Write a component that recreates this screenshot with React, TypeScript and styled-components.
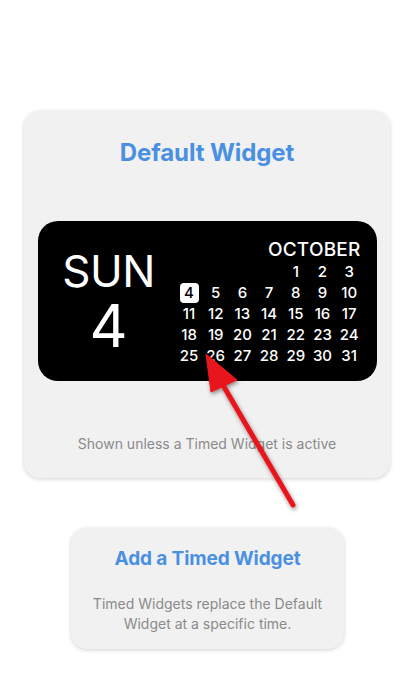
import React from "react";
import styled, { createGlobalStyle } from "styled-components";

const GlobalStyle = createGlobalStyle`
  html, body {
    margin: 0;
    padding: 0;
    background: #ffffff;
  }
  body {
    font-family: Inter, "Noto Sans", "Liberation Sans", sans-serif;
    -webkit-font-smoothing: antialiased;
  }
`;

const weeks: (number | null)[][] = [
  [null, null, null, null, 1, 2, 3],
  [4, 5, 6, 7, 8, 9, 10],
  [11, 12, 13, 14, 15, 16, 17],
  [18, 19, 20, 21, 22, 23, 24],
  [25, 26, 27, 28, 29, 30, 31],
];

const today = 4;

const App: React.FC = () => {
  return (
    <Page>
      <GlobalStyle />
      <DefaultCard>
        <CardTitle size={24}>Default Widget</CardTitle>
        <Widget>
          <DayBlock>
            <DayName>SUN</DayName>
            <DayNumber>{today}</DayNumber>
          </DayBlock>
          <Calendar>
            <MonthName>OCTOBER</MonthName>
            <Grid>
              {weeks.flat().map((d, i) => (
                <Cell key={i}>
                  {d !== null && <DayText active={d === today}>{d}</DayText>}
                </Cell>
              ))}
            </Grid>
          </Calendar>
        </Widget>
        <Caption>Shown unless a Timed Widget is active</Caption>
      </DefaultCard>

      <TimedCard>
        <CardTitle size={19}>Add a Timed Widget</CardTitle>
        <TimedText>
          Timed Widgets replace the Default
          <br />
          Widget at a specific time.
        </TimedText>
      </TimedCard>

      {/* annotation arrow drawn over the screenshot */}
      <Arrow viewBox="0 0 410 700" width="410" height="700">
        <defs>
          <filter id="arrowShadow" x="-20%" y="-20%" width="140%" height="140%">
            <feDropShadow dx="1" dy="2" stdDeviation="2" floodColor="#000" floodOpacity="0.45" />
          </filter>
        </defs>
        <g filter="url(#arrowShadow)" fill="#e8141b" stroke="#e8141b">
          <line x1="293" y1="505" x2="220" y2="380" strokeWidth="5" strokeLinecap="round" />
          <polygon points="206,354 237,380 211,392" strokeWidth="1" strokeLinejoin="round" />
        </g>
      </Arrow>
    </Page>
  );
};

const Page = styled.div`
  position: relative;
  width: 410px;
  height: 700px;
  padding-top: 111px;
  box-sizing: border-box;
  display: flex;
  flex-direction: column;
  align-items: center;
`;

const Card = styled.div`
  background: #f1f1f1;
  border-radius: 16px;
  box-shadow: 0 1px 4px rgba(0, 0, 0, 0.18);
  display: flex;
  flex-direction: column;
  align-items: center;
  box-sizing: border-box;
`;

const DefaultCard = styled(Card)`
  width: 366px;
  height: 367px;
  margin-left: 4px;
  padding: 28px 14px 0;
`;

const TimedCard = styled(Card)`
  width: 273px;
  height: 121px;
  margin-top: 50px;
  margin-left: 5px;
  padding-top: 17px;
`;

const CardTitle = styled.div<{ size: number }>`
  color: #4a90e2;
  font-size: ${(p) => p.size}px;
  font-weight: 700;
  line-height: 28px;
  letter-spacing: -0.1px;
`;

const Widget = styled.div`
  margin-top: 54px;
  width: 339px;
  height: 160px;
  background: #000;
  border-radius: 20px;
  display: flex;
  align-items: stretch;
  box-sizing: border-box;
  padding: 18px 14px 0 4px;
`;

const DayBlock = styled.div`
  flex: 1;
  display: flex;
  flex-direction: column;
  align-items: center;
  padding-top: 11px;
  color: #fff;
`;

const DayName = styled.div`
  font-size: 44px;
  font-weight: 400;
  line-height: 42px;
  letter-spacing: -0.5px;
`;

const DayNumber = styled.div`
  font-size: 59px;
  font-weight: 400;
  line-height: 56px;
  margin-top: 6px;
`;

const Calendar = styled.div`
  display: flex;
  flex-direction: column;
  align-items: flex-end;
  color: #fff;
`;

const MonthName = styled.div`
  font-size: 19px;
  font-weight: 500;
  line-height: 22px;
  margin-right: 2px;
  letter-spacing: 0.2px;
`;

const Grid = styled.div`
  display: grid;
  grid-template-columns: repeat(7, 26.7px);
  grid-auto-rows: 20.8px;
  margin-top: 1px;
`;

const Cell = styled.div`
  display: flex;
  align-items: center;
  justify-content: center;
`;

const DayText = styled.span<{ active?: boolean }>`
  font-size: 15px;
  font-weight: 500;
  line-height: 20px;
  min-width: ${(p) => (p.active ? "19px" : "0")};
  height: 20px;
  text-align: center;
  border-radius: 4px;
  background: ${(p) => (p.active ? "#fff" : "transparent")};
  color: ${(p) => (p.active ? "#000" : "#fff")};
`;

const Caption = styled.div`
  margin-top: 54px;
  color: #8a8a8a;
  font-size: 14px;
  line-height: 18px;
`;

const TimedText = styled.div`
  margin-top: 21px;
  color: #8a8a8a;
  font-size: 14px;
  line-height: 20px;
  text-align: center;
`;

const Arrow = styled.svg`
  position: absolute;
  left: 0;
  top: 0;
  pointer-events: none;
`;

export default App;
